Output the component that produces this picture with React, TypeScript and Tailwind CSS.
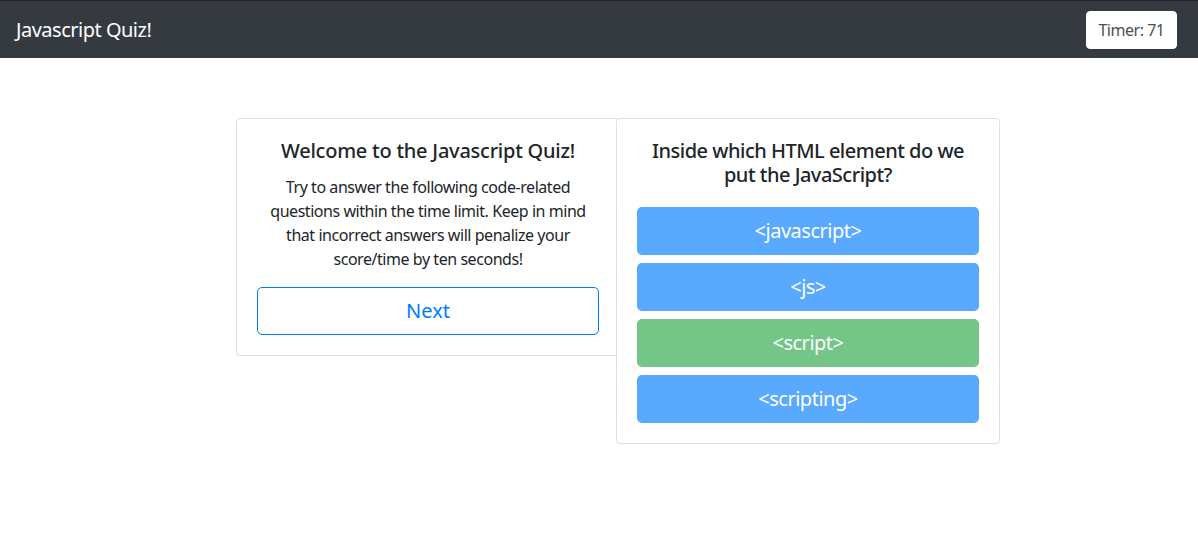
const answers = [
  { label: '<javascript>', correct: false },
  { label: '<js>', correct: false },
  { label: '<script>', correct: true },
  { label: '<scripting>', correct: false },
];

function Navbar({ timer }: { timer: number }) {
  return (
    <header className="flex h-[58px] items-center justify-between border-t border-[#1f2226] bg-[#343a40] pl-4 pr-[21px]">
      <span className="text-[20px] leading-[30px] tracking-[-0.025em] text-white">Javascript Quiz!</span>
      <button className="h-[38px] w-[91px] rounded border border-white bg-white text-[16px] tracking-[-0.03em] text-[#495057]">
        Timer: {timer}
      </button>
    </header>
  );
}

export default function App() {
  return (
    <div className="min-h-[536px] bg-white font-['Noto_Sans',sans-serif] text-[#212529]">
      <Navbar timer={71} />
      <main className="ml-[236px] mt-[60px] flex items-start">
        <section className="w-[384px] shrink-0 rounded border border-[#dfdfdf] bg-white p-5 text-center">
          <h5 className="mb-3 text-[20px] font-medium leading-[24px] tracking-[-0.012em]">
            Welcome to the Javascript Quiz!
          </h5>
          <p className="mb-4 px-2 text-[16px] leading-[24px] tracking-[-0.028em]">
            Try to answer the following code-related questions within the time limit. Keep in mind that
            incorrect answers will penalize your score/time by ten seconds!
          </p>
          <button className="h-[48px] w-full rounded-[5px] border border-[#007bff] text-[20px] text-[#007bff]">
            Next
          </button>
        </section>
        <section className="-ml-[4px] w-[384px] shrink-0 rounded border border-[#dfdfdf] bg-white p-5 text-center">
          <h5 className="mb-5 px-2 text-[20px] font-medium leading-[24px] tracking-[-0.025em]">
            Inside which HTML element do we put the JavaScript?
          </h5>
          {answers.map((a) => (
            <button
              key={a.label}
              className={
                'mt-2 block h-[48px] w-full rounded-[5px] text-[20px] tracking-[-0.025em] text-white ' +
                (a.correct ? 'bg-[#73c686]' : 'bg-[#59a9ff]')
              }
            >
              {a.label}
            </button>
          ))}
        </section>
      </main>
    </div>
  );
}
